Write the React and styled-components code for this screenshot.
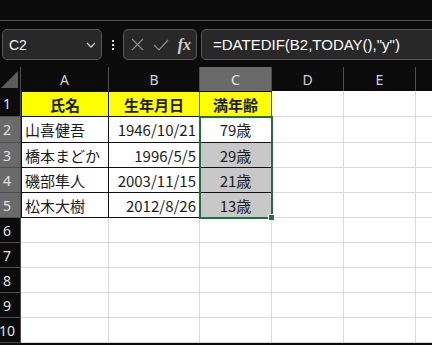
import React from 'react';
import styled, { createGlobalStyle } from 'styled-components';

const GlobalStyle = createGlobalStyle`
  body {
    margin: 0;
    background: #0b0b0b;
    overflow: hidden;
  }
`;

const Page = styled.div`
  width: 432px;
  height: 345px;
  overflow: hidden;
  background: #0b0b0b;
  font-family: 'Liberation Sans', Arial, sans-serif;
`;

const TopBand = styled.div`
  height: 20px;
  border-bottom: 1px solid #555;
`;

const FormulaRow = styled.div`
  display: flex;
  align-items: center;
  height: 31px;
  padding: 8px 0 0 2px;
`;

const Box = styled.div`
  box-sizing: border-box;
  height: 31px;
  border: 1px solid #575757;
  border-radius: 5px;
  background: #282828;
  display: flex;
  align-items: center;
`;

const NameBox = styled(Box)`
  width: 100px;
  justify-content: space-between;
  padding: 0 5px 0 6px;
  color: #f2f2f2;
  font-size: 14px;
`;

const Dots = styled.div`
  width: 21px;
  display: flex;
  flex-direction: column;
  align-items: center;
  gap: 2px;
  span {
    width: 2px;
    height: 2px;
    background: #d8d8d8;
  }
`;

const FuncBox = styled(Box)`
  width: 74px;
  padding: 0 5px 0 7px;
  justify-content: space-between;
`;

const Fx = styled.span`
  font-family: 'Liberation Serif', 'DejaVu Serif', serif;
  font-style: italic;
  font-weight: bold;
  font-size: 16px;
  color: #cfcfcf;
`;

const FormulaBox = styled(Box)`
  flex: 1;
  margin-left: 4px;
  margin-right: -10px;
  padding-left: 11px;
  color: #ffffff;
  font-size: 15px;
  border-radius: 5px 0 0 5px;
`;

const Grid = styled.div`
  margin-top: 7px;
  display: grid;
  grid-template-columns: 21px 88px 91px 72px 72px 72px 72px;
  grid-template-rows: 24px 26px 26px repeat(8, 25px);
`;

const Corner = styled.div`
  grid-column: 1;
  grid-row: 1;
  position: relative;
  border-right: 1px solid #4d4d4d;
  &::after {
    content: '';
    position: absolute;
    right: 2px;
    bottom: 3px;
    border-style: solid;
    border-width: 0 0 17px 17px;
    border-color: transparent transparent #5b5b5b transparent;
  }
`;

const ColHead = styled.div`
  grid-row: 1;
  grid-column: ${p => p.$col};
  box-sizing: border-box;
  display: flex;
  align-items: center;
  justify-content: center;
  border-right: 1px solid #4d4d4d;
  background: ${p => (p.$active ? '#6a6a6a' : '#0b0b0b')};
  color: ${p => (p.$active ? '#e6e6e6' : '#d2d2d2')};
  font-family: 'Noto Sans', sans-serif;
  font-size: 14px;
`;

const RowHead = styled.div`
  grid-column: 1;
  grid-row: ${p => p.$row};
  box-sizing: border-box;
  display: flex;
  align-items: center;
  justify-content: center;
  padding-right: 6px;
  border-bottom: 1px solid #4d4d4d;
  border-right: 1px solid #4d4d4d;
  background: ${p => (p.$active ? '#6a6a6a' : '#0b0b0b')};
  color: #e2e2e2;
  font-family: 'Noto Sans', sans-serif;
  font-size: 14px;
`;

const Cell = styled.div`
  grid-column: ${p => p.$col};
  grid-row: ${p => p.$row};
  box-sizing: border-box;
  display: flex;
  align-items: center;
  justify-content: ${p => p.$align || 'flex-start'};
  padding: 0 3px;
  background: ${p => p.$fill || '#ffffff'};
  border-right: 1px solid ${p => p.$rightColor || (p.$boxed ? '#111' : '#d9d9d9')};
  border-bottom: 1px solid ${p => (p.$boxed ? '#111' : '#d9d9d9')};
  border-left: ${p => (p.$first ? '1px solid #111' : 'none')};
  border-top: ${p => (p.$top ? '1px solid #111' : 'none')};
  color: #1c1c1c;
  font-family: 'Noto Sans CJK JP', 'Noto Sans', sans-serif;
  font-size: 15px;
  font-weight: ${p => (p.$bold ? 700 : 400)};
  white-space: nowrap;
  overflow: hidden;
`;

const Selection = styled.div`
  grid-column: 4;
  grid-row: 3 / 7;
  margin: -1px;
  border: 2px solid #1f6f41;
  position: relative;
  pointer-events: none;
`;

const FillHandle = styled.div`
  position: absolute;
  right: -4px;
  bottom: -4px;
  width: 5px;
  height: 5px;
  background: #1f6f41;
  border: 1px solid #ffffff;
`;

const columns = ['A', 'B', 'C', 'D', 'E', 'F'];

const people = [
  ['山喜健吾', '1946/10/21', '79歳'],
  ['橋本まどか', '1996/5/5', '29歳'],
  ['磯部隼人', '2003/11/15', '21歳'],
  ['松木大樹', '2012/8/26', '13歳'],
];

const headers = ['氏名', '生年月日', '満年齢'];

const Chevron = () => (
  <svg width="10" height="6" viewBox="0 0 10 6">
    <path d="M1 1l4 4 4-4" fill="none" stroke="#d0d0d0" strokeWidth="1.3" />
  </svg>
);

const Cross = () => (
  <svg width="13" height="13" viewBox="0 0 13 13">
    <path d="M1 1l11 11M12 1L1 12" stroke="#8c8c8c" strokeWidth="1.2" />
  </svg>
);

const Check = () => (
  <svg width="16" height="12" viewBox="0 0 16 12">
    <path d="M1 6l5 5L15 1" fill="none" stroke="#8c8c8c" strokeWidth="1.2" />
  </svg>
);

const App = () => {
  const rows = [];
  for (let r = 1; r <= 10; r++) {
    rows.push(
      <RowHead key={'h' + r} $row={r + 1} $active={r >= 2 && r <= 5}>
        {r}
      </RowHead>
    );
    columns.forEach((col, c) => {
      let props = {};
      let text = '';
      if (r === 1 && c < 3) {
        text = headers[c];
        props = { $boxed: true, $top: true, $fill: '#ffff00', $bold: true, $align: 'center' };
        if (c === 1 || c === 2) props.$rightColor = '#1d5e38';
      } else if (r >= 2 && r <= 5 && c < 3) {
        text = people[r - 2][c];
        props = { $boxed: true, $align: c === 1 ? 'flex-end' : c === 2 ? 'center' : 'flex-start' };
        if (c === 2 && r > 2) props.$fill = '#c8c8c8';
      }
      rows.push(
        <Cell key={col + r} $row={r + 1} $col={c + 2} $first={c === 0 && r <= 5} {...props}>
          {text}
        </Cell>
      );
    });
  }

  return (
    <Page>
      <GlobalStyle />
      <TopBand />
      <FormulaRow>
        <NameBox>
          <span>C2</span>
          <Chevron />
        </NameBox>
        <Dots>
          <span />
          <span />
          <span />
        </Dots>
        <FuncBox>
          <Cross />
          <Check />
          <Fx>fx</Fx>
        </FuncBox>
        <FormulaBox>=DATEDIF(B2,TODAY(),"y")</FormulaBox>
      </FormulaRow>
      <Grid>
        <Corner />
        {columns.map((col, i) => (
          <ColHead key={col} $col={i + 2} $active={col === 'C'}>
            {col}
          </ColHead>
        ))}
        {rows}
        <Selection>
          <FillHandle />
        </Selection>
      </Grid>
    </Page>
  );
};

export default App;
